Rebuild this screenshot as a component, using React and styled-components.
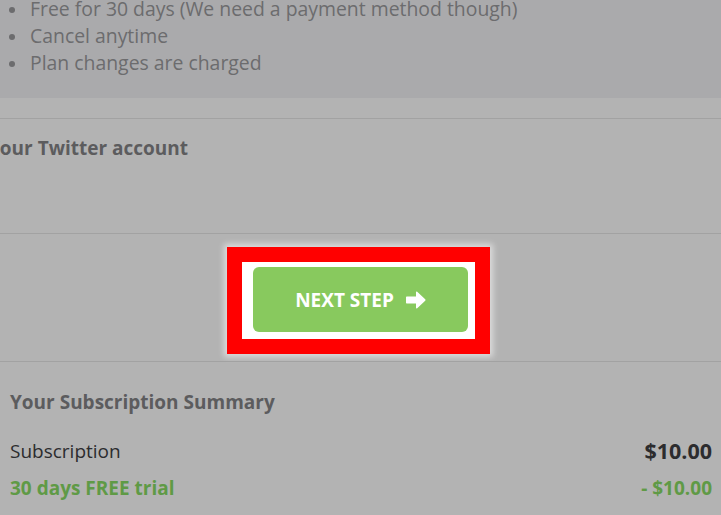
import React from "react";
import styled, { createGlobalStyle } from "styled-components";

const GlobalStyle = createGlobalStyle`
  html, body {
    margin: 0;
    padding: 0;
    background: #b3b3b3;
    overflow: hidden;
  }
  body {
    font-family: "Open Sans", "Liberation Sans", sans-serif;
  }
`;

const Page = styled.div`
  width: 721px;
  height: 515px;
  background: #b3b3b3;
  overflow: hidden;
  display: flex;
  flex-direction: column;
`;

const PlanBox = styled.ul`
  margin: -5px 0 0;
  padding: 0 0 0 30px;
  height: 103px;
  flex-shrink: 0;
  box-sizing: border-box;
  background: #aaaaac;
  color: #6c6c6e;
  font-size: 19.4px;
  line-height: 27px;
  list-style: none;
  li {
    position: relative;
  }
  li::before {
    content: "";
    position: absolute;
    left: -21px;
    top: 12px;
    width: 6px;
    height: 6px;
    border-radius: 50%;
    background: #6c6c6e;
  }
`;

const Section = styled.div`
  border-top: 1px solid #a2a2a2;
  height: ${(p) => p.height}px;
  flex-shrink: 0;
  box-sizing: border-box;
  display: flex;
  flex-direction: column;
  align-items: ${(p) => (p.center ? "center" : "stretch")};
  padding: ${(p) => (p.center ? "13px 4px 0 0" : "0")};
`;

const Spacer = styled.div`
  height: 20px;
  flex-shrink: 0;
`;

const SectionTitle = styled.h3`
  margin: ${(p) => p.top}px 0 0 ${(p) => p.left}px;
  font-size: 19px;
  font-weight: 700;
  color: #5c5c5e;
  line-height: 26px;
`;

const Highlight = styled.div`
  border: 15px solid #ff0000;
  background: #ffffff;
  padding: 5px 7px 7px 11px;
  box-shadow: 0 0 6px 3px rgba(255, 255, 255, 0.55);
`;

const NextButton = styled.button`
  width: 215px;
  height: 65px;
  border: none;
  border-radius: 6px;
  background: #88c95e;
  color: #ffffff;
  font-family: "Open Sans", "Liberation Sans", sans-serif;
  font-size: 19px;
  font-weight: 700;
  display: flex;
  align-items: center;
  justify-content: center;
  gap: 12px;
  padding: 0;
  svg {
    width: 20px;
    height: 18px;
  }
`;

const Summary = styled.div`
  padding: 0 9px 0 10px;
`;

const Row = styled.div`
  display: flex;
  justify-content: space-between;
  align-items: center;
  margin-top: ${(p) => p.top}px;
  font-size: 19px;
  line-height: 26px;
  color: ${(p) => (p.green ? "#5f9a46" : "#2c2c2e")};
  font-weight: ${(p) => (p.green ? 700 : 400)};
`;

const Amount = styled.span`
  font-weight: 700;
  font-size: ${(p) => (p.green ? 19 : 21.5)}px;
`;

const ArrowIcon = () => (
  <svg viewBox="0 0 20 18" fill="#ffffff">
    <path d="M1 5.5 H10 V1.2 C10 0.5 10.7 0.2 11.2 0.7 L19.2 8.2 C19.6 8.6 19.6 9.4 19.2 9.8 L11.2 17.3 C10.7 17.8 10 17.5 10 16.8 V12.5 H1 C0.4 12.5 0 12.1 0 11.5 V6.5 C0 5.9 0.4 5.5 1 5.5 Z" />
  </svg>
);

export default function App() {
  return (
    <Page>
      <GlobalStyle />
      <PlanBox>
        <li>Free for 30 days (We need a payment method though)</li>
        <li>Cancel anytime</li>
        <li>Plan changes are charged</li>
      </PlanBox>
      <Spacer />
      <Section height={115}>
        <SectionTitle top={16} left={-12}>
          Your Twitter account
        </SectionTitle>
      </Section>
      <Section height={128} center>
        <Highlight>
          <NextButton>
            NEXT STEP <ArrowIcon />
          </NextButton>
        </Highlight>
      </Section>
      <Section height={160}>
        <Summary>
          <SectionTitle top={27} left={0}>
            Your Subscription Summary
          </SectionTitle>
          <Row top={23}>
            <span>Subscription</span>
            <Amount>$10.00</Amount>
          </Row>
          <Row top={11} green>
            <span>30 days FREE trial</span>
            <Amount green>- $10.00</Amount>
          </Row>
        </Summary>
      </Section>
    </Page>
  );
}
